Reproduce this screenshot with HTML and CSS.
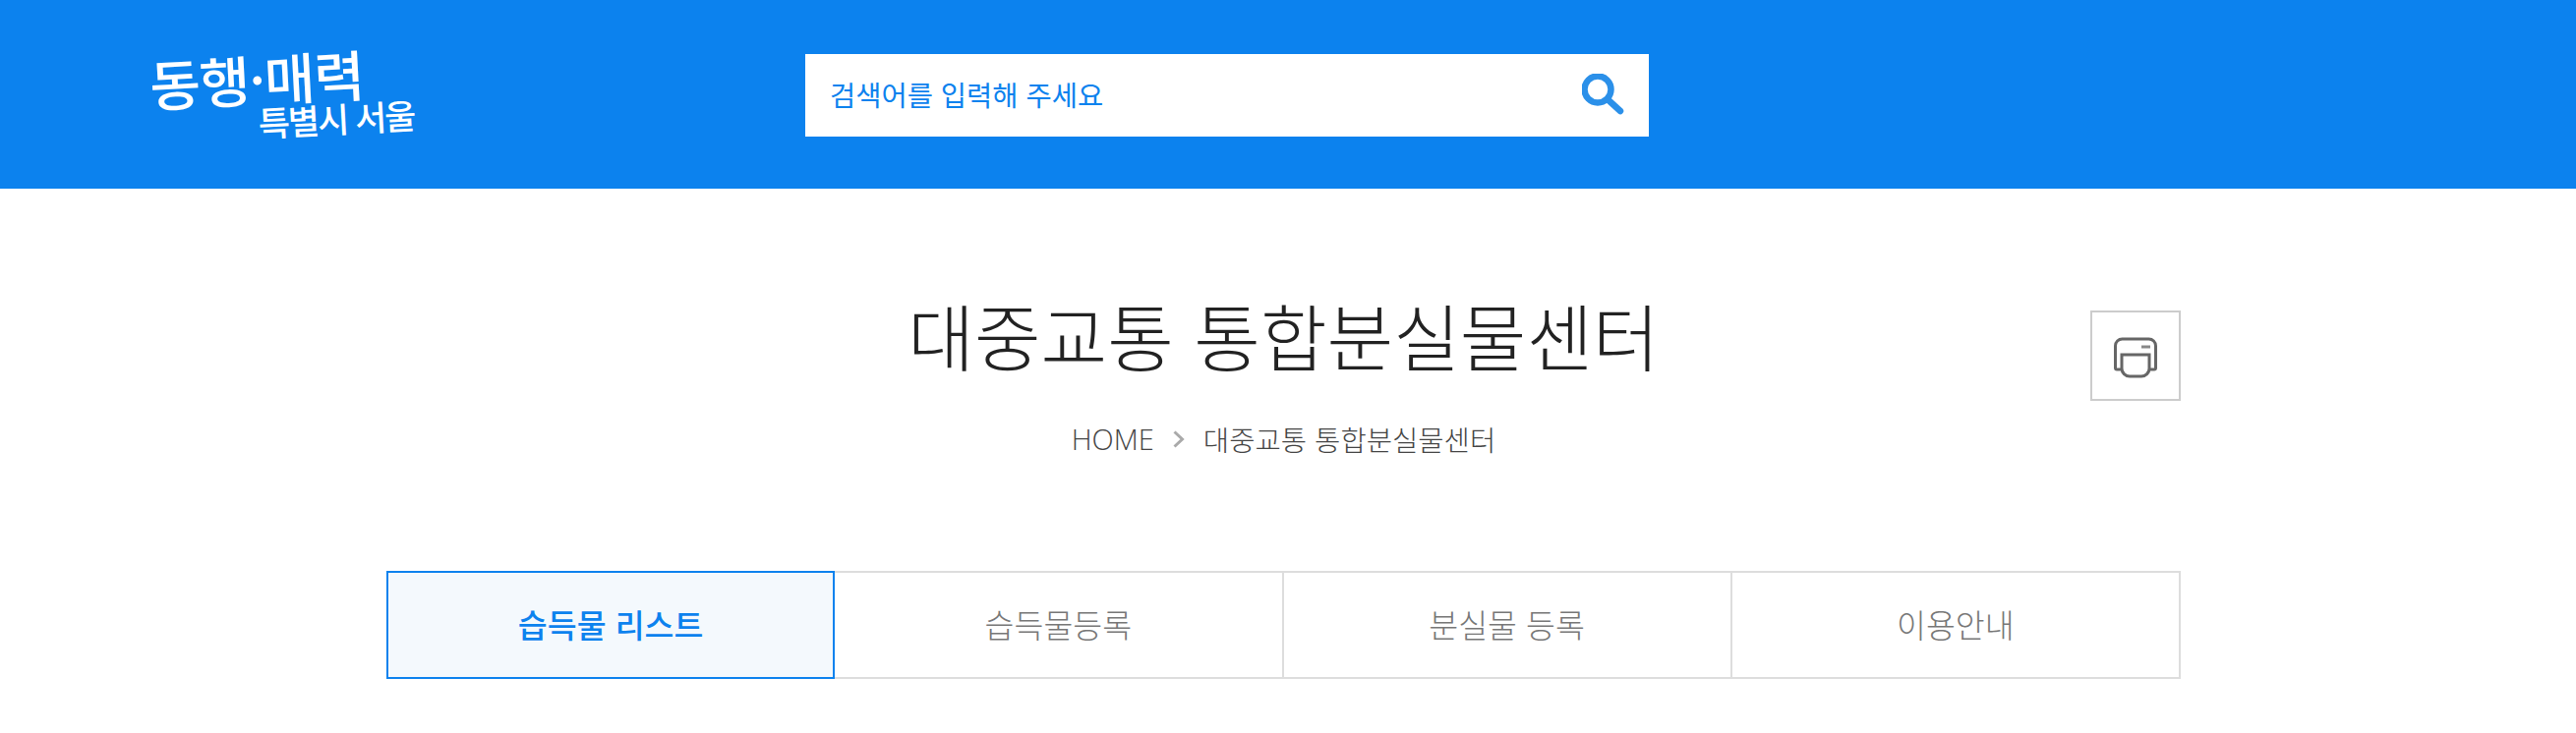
FILE: index.html
```html
<!DOCTYPE html>
<html lang="ko">
<head>
  <meta charset="UTF-8" />
  <meta name="viewport" content="width=device-width, initial-scale=1" />
  <title>대중교통 통합분실물센터</title>
  <link rel="stylesheet" href="styles.css">
</head>
<body>
<header class="top-bar">
  <div class="logo">
    <div class="logo-line1">동행·매력</div>
    <div class="logo-line2">특별시 서울</div>
  </div>
  <div class="search-box">
    <span class="search-text">검색어를 입력해 주세요</span>
    <svg class="search-icon" viewBox="0 0 44 42" width="44" height="42" aria-hidden="true">
      <circle cx="16" cy="16" r="13.5" fill="none" stroke="#2b90e9" stroke-width="6.5"/>
      <line x1="27" y1="27" x2="39" y2="38" stroke="#2b90e9" stroke-width="6.5" stroke-linecap="round"/>
    </svg>
  </div>
</header>

<main class="content">
  <div class="title-area">
    <h1 class="page-title">대중교통 통합분실물센터</h1>
    <button class="print-btn" type="button" aria-label="인쇄">
      <svg viewBox="0 0 44 42" width="44" height="42" aria-hidden="true">
        <path d="M8 33H3a1.5 1.5 0 0 1-1.5-1.5V9a7 7 0 0 1 7-7h27a7 7 0 0 1 7 7v22.5A1.5 1.5 0 0 1 41 33h-5" fill="none" stroke="#666" stroke-width="3"/>
        <path d="M8 18h28v14a8 8 0 0 1-8 8H16a8 8 0 0 1-8-8z" fill="#fff" stroke="#666" stroke-width="3"/>
        <line x1="28" y1="10" x2="37" y2="10" stroke="#888" stroke-width="3"/>
      </svg>
    </button>
  </div>

  <div class="breadcrumb">
    <span>HOME</span>
    <svg class="crumb-arrow" viewBox="0 0 12 18" width="12" height="18" aria-hidden="true">
      <path d="M1.5 1.5 9.5 9l-8 7.5" fill="none" stroke="#aaa" stroke-width="3"/>
    </svg>
    <span class="crumb-current">대중교통 통합분실물센터</span>
  </div>

  <nav class="tabs">
    <a class="tab active">습득물 리스트</a>
    <a class="tab">습득물등록</a>
    <a class="tab">분실물 등록</a>
    <a class="tab">이용안내</a>
  </nav>
</main>
</body>
</html>
```

FILE: styles.css
```css
body {
  margin: 0;
  background-color: #fff;
  font-family: "Noto Sans CJK KR", "Open Sans", sans-serif;
  color: #222;
}

/* blue header */
.top-bar {
  display: flex;
  align-items: center;
  height: 192px;
  background-color: #0c82ee;
}

.logo {
  display: flex;
  flex-direction: column;
  width: 267px;
  margin-left: 153px;
  color: #fff;
  font-weight: 500;
  transform: rotate(-3deg);
}

.logo-line1 {
  font-size: 56px;
  line-height: 62px;
  letter-spacing: -1px;
}

.logo-line2 {
  align-self: flex-end;
  margin-top: -8px;
  font-size: 35px;
  line-height: 44px;
  letter-spacing: -2px;
}

.search-box {
  display: flex;
  align-items: center;
  justify-content: space-between;
  box-sizing: border-box;
  width: 858px;
  height: 84px;
  margin-top: 2px;
  margin-left: 399px;
  padding: 0 25px 3px;
  background-color: #fff;
}

.search-text {
  font-size: 28.5px;
  font-weight: 400;
  color: #0c82ee;
}

.search-icon {
  margin-right: -1px;
}

/* page content */
.content {
  width: 1825px;
  margin-left: 393px;
}

.title-area {
  position: relative;
  padding-top: 94px;
  text-align: center;
}

.page-title {
  margin: 0;
  font-size: 73.5px;
  line-height: 108px;
  font-weight: 300;
  color: #222;
}

.print-btn {
  position: absolute;
  top: 124px;
  right: 0;
  display: flex;
  align-items: center;
  justify-content: center;
  box-sizing: border-box;
  width: 92px;
  height: 92px;
  padding: 4px 0 0;
  background: #fff;
  border: 2px solid #ccc;
}

.breadcrumb {
  display: flex;
  align-items: center;
  justify-content: center;
  gap: 19px;
  margin-top: 32px;
  font-family: "Open Sans", "Noto Sans CJK KR", sans-serif;
  font-size: 29px;
  line-height: 42px;
  font-weight: 300;
  color: #444;
}

.crumb-current {
  font-family: "Noto Sans CJK KR", sans-serif;
  font-size: 28.6px;
}

/* tabs */
.tabs {
  display: grid;
  grid-template-columns: repeat(4, 1fr);
  margin-top: 113px;
}

.tab {
  display: flex;
  align-items: center;
  justify-content: center;
  box-sizing: border-box;
  height: 110px;
  margin-left: -2px;
  padding-bottom: 3px;
  border: 2px solid #ddd;
  font-size: 32.5px;
  font-weight: 300;
  color: #777;
}

.tab:first-child {
  margin-left: 0;
}

.tab.active {
  position: relative;
  z-index: 1;
  border-color: #0c82ee;
  background-color: #f4f9fd;
  color: #0c82ee;
  font-weight: 500;
}
```
